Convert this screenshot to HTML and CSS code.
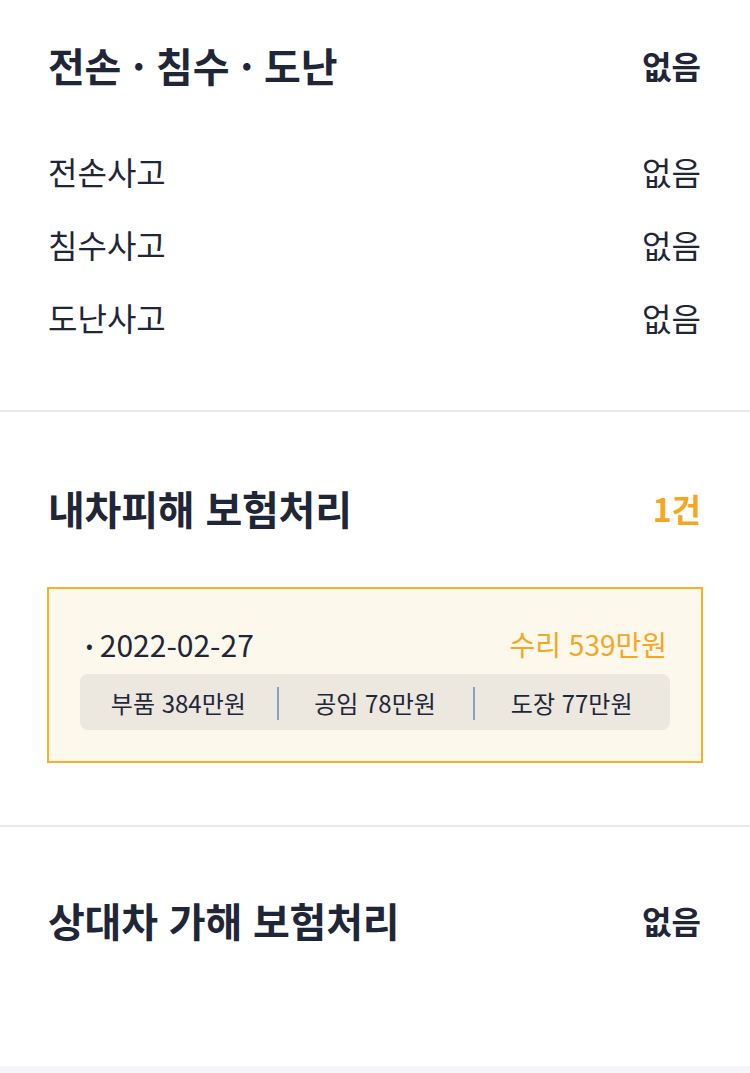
FILE: index.html
```html
<!DOCTYPE html>
<html lang="ko">
<head>
    <meta charset="UTF-8">
    <meta name="viewport" content="width=device-width, initial-scale=1.0">
    <title>보험처리 이력</title>
    <link rel="stylesheet" href="styles.css">
</head>
<body>

    <!-- 전손 / 침수 / 도난 -->
    <div class="section section-first">
        <div class="section-header">
            <h2>전손 · 침수 · 도난</h2>
            <span class="count">없음</span>
        </div>
        <ul class="item-list">
            <li><span>전손사고</span><span>없음</span></li>
            <li><span>침수사고</span><span>없음</span></li>
            <li><span>도난사고</span><span>없음</span></li>
        </ul>
    </div>

    <!-- 내차피해 -->
    <div class="section section-mine">
        <div class="section-header">
            <h2>내차피해 보험처리</h2>
            <span class="count highlight">1건</span>
        </div>
        <div class="claim-card">
            <div class="claim-top">
                <span class="claim-date">2022-02-27</span>
                <span class="claim-total">수리 539만원</span>
            </div>
            <div class="claim-detail">
                <span>부품 384만원</span>
                <span>공임 78만원</span>
                <span>도장 77만원</span>
            </div>
        </div>
    </div>

    <!-- 상대차 -->
    <div class="section section-other">
        <div class="section-header">
            <h2>상대차 가해 보험처리</h2>
            <span class="count">없음</span>
        </div>
    </div>

    <div class="footer-strip"></div>

</body>
</html>
```

FILE: styles.css
```css
body {
    margin: 0;
    font-family: "Noto Sans CJK KR", "Noto Sans", sans-serif;
    color: #1f2638;
    background-color: #ffffff;
}

.section {
    padding: 60px 48px 0;
    border-bottom: 2px solid #e8e8ef;
}

.section-first {
    padding-top: 29px;
    padding-bottom: 57px;
}

.section-mine {
    padding-bottom: 62px;
}

.section-other {
    padding-top: 57px;
    height: 182px;
    border-bottom: none;
}

.section-header {
    display: flex;
    justify-content: space-between;
    align-items: center;
    height: 72px;
}

.section-header h2 {
    margin: 0;
    font-size: 40px;
    font-weight: 700;
    letter-spacing: -0.2px;
}

.count {
    font-size: 32px;
    font-weight: 700;
    margin-right: 1px;
}

.count.highlight {
    color: #f5a623;
}

.item-list {
    list-style: none;
    margin: 33px 0 0;
    padding: 0;
}

.item-list li {
    display: flex;
    justify-content: space-between;
    align-items: center;
    height: 73px;
    font-size: 32px;
    margin-right: 1px;
}

.claim-card {
    margin: 43px -1px 0;
    padding: 35px 31px 31px;
    border: 2px solid #f5b12e;
    background-color: #fcf8ec;
}

.claim-top {
    display: flex;
    justify-content: space-between;
    align-items: center;
    height: 40px;
    padding: 0 3px 0 6px;
}

.claim-date {
    font-size: 30px;
}

.claim-date::before {
    content: "•";
    font-size: 20px;
    margin-right: 7px;
    vertical-align: 4px;
}

.claim-total {
    color: #f5a623;
    font-size: 28px;
}

.claim-detail {
    display: grid;
    grid-template-columns: 1fr 1fr 1fr;
    align-items: center;
    height: 56px;
    margin-top: 10px;
    background-color: #ece7df;
    border-radius: 8px;
    font-size: 24px;
}

.claim-detail span {
    position: relative;
    text-align: center;
}

.claim-detail span + span::before {
    content: "";
    position: absolute;
    left: 0;
    top: 2px;
    bottom: 0;
    width: 2px;
    background-color: #8c9cc0;
}

.footer-strip {
    height: 8px;
    background-color: #f5f5fa;
}
```
